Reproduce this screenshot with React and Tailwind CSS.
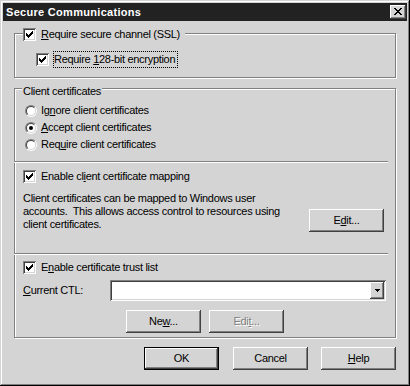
const FACE = 'bg-[#d4d4d4]';
const SUNKEN = 'shadow-[inset_1px_1px_0_#808080,inset_-1px_-1px_0_#fff,inset_2px_2px_0_#404040,inset_-2px_-2px_0_#d4d4d4]';
const RAISED = 'shadow-[inset_-1px_-1px_0_#404040,inset_1px_1px_0_#fff,inset_-2px_-2px_0_#808080,inset_2px_2px_0_#d4d4d4]';
const ETCHED = 'border border-[#808080] shadow-[inset_1px_1px_0_#fff,1px_1px_0_#fff]';

function Check({ checked = true }) {
  return (
    <span className={`inline-flex shrink-0 w-[13px] h-[13px] pl-[3px] pt-[3px] bg-white ${SUNKEN}`}>
      {checked && (
        <svg width="7" height="7" viewBox="0 0 7 7" shapeRendering="crispEdges" className="block">
          <path
            fill="#000"
            d="M6 0h1v1h-1zM5 1h2v1h-2zM0 2h1v1h-1zM4 2h3v1h-3zM0 3h2v1h-2zM3 3h3v1h-3zM0 4h5v1h-5zM1 5h3v1h-3zM2 6h1v1h-1z"
          />
        </svg>
      )}
    </span>
  );
}

function Radio({ checked }) {
  return (
    <span className="inline-flex shrink-0 w-[12px] h-[12px] rounded-full border border-t-[#808080] border-l-[#808080] border-r-white border-b-white">
      <span className="flex items-center justify-center w-[10px] h-[10px] rounded-full border border-t-[#404040] border-l-[#404040] border-r-[#d4d4d4] border-b-[#d4d4d4] bg-white">
        {checked && <span className="block w-[4px] h-[4px] rounded-full bg-black" />}
      </span>
    </span>
  );
}

function Btn({ children, isDefault, disabled, className = '' }) {
  const frame = isDefault
    ? 'border border-black shadow-[inset_-1px_-1px_0_#404040,inset_1px_1px_0_#fff,inset_-2px_-2px_0_#808080]'
    : RAISED;
  return (
    <div className={`flex items-center justify-center w-[75px] h-[23px] shrink-0 ${FACE} ${frame} ${className}`}>
      <span className={disabled ? 'text-[#808080] [text-shadow:1px_1px_0_#fff]' : ''}>{children}</span>
    </div>
  );
}

function Sep() {
  return <div className="-ml-[1px] mr-[7px] h-[2px] border-t border-t-[#808080] border-b border-b-white" />;
}

function CloseBtn() {
  return (
    <div className={`flex w-[16px] h-[14px] pl-[4px] pt-[3px] ${FACE} shadow-[inset_-1px_-1px_0_#404040,inset_1px_1px_0_#fff,inset_-2px_-2px_0_#808080]`}>
      <svg width="8" height="7" viewBox="0 0 8 7" shapeRendering="crispEdges" className="block">
        <path
          fill="#000"
          d="M0 0h2v1h-2zM6 0h2v1h-2zM1 1h2v1h-2zM5 1h2v1h-2zM2 2h4v1h-4zM3 3h2v1h-2zM2 4h4v1h-4zM1 5h2v1h-2zM5 5h2v1h-2zM0 6h2v1h-2zM6 6h2v1h-2z"
        />
      </svg>
    </div>
  );
}

function Combo() {
  return (
    <div className={`flex justify-end w-[276px] h-[21px] p-[2px] bg-white ${SUNKEN}`}>
      <div className={`flex items-center justify-center w-[14px] h-[17px] ${FACE} shadow-[inset_-1px_-1px_0_#404040,inset_1px_1px_0_#fff,inset_-2px_-2px_0_#808080]`}>
        <svg width="5" height="3" viewBox="0 0 5 3" shapeRendering="crispEdges" className="block">
          <path fill="#000" d="M0 0h5v1h-5zM1 1h3v1h-3zM2 2h1v1h-1z" />
        </svg>
      </div>
    </div>
  );
}

const U = ({ children }) => <span className="underline underline-offset-[1px]">{children}</span>;

export default function App() {
  return (
    <div className={`w-[410px] h-[386px] p-[3px] ${FACE} shadow-[inset_-1px_-1px_0_#000,inset_1px_1px_0_#d4d4d4,inset_-2px_-2px_0_#808080,inset_2px_2px_0_#fff] [font-family:'Liberation_Sans',Arial,sans-serif] text-[11px] leading-[13px] tracking-[-0.3px] text-black`}>
      <div className="flex items-center justify-between h-[18px] pl-[3px] pr-[1px] bg-[#222]">
        <span className="font-bold text-white tracking-[0.3px]">Secure Communications</span>
        <CloseBtn />
      </div>

      <div className="px-[11px]">
        {/* SSL */}
        <div className={`mt-[12px] pb-[9px] ${ETCHED}`}>
          <div className="flex -mt-[6px] ml-[8px]">
            <span className={`flex items-center gap-[5px] h-[13px] pr-[5px] ${FACE}`}>
              <Check />
              <span><U>R</U>equire secure channel (SSL)</span>
            </span>
          </div>
          <div className="flex items-center gap-[4px] h-[17px] mt-[10px] pl-[21px]">
            <Check />
            <span className="border border-dotted border-black leading-[15px] pr-[2px]">
              Require <U>1</U>28-bit encryption
            </span>
          </div>
        </div>

        {/* Client certificates */}
        <div className={`mt-[10px] pb-[4px] ${ETCHED}`}>
          <div className="flex -mt-[4px] ml-[7px]">
            <span className={`h-[13px] px-[1px] ${FACE}`}>Client certificates</span>
          </div>
          <div className="flex flex-col mt-[4px] pl-[10px]">
            <div className="flex items-center gap-[4px] h-[17px]">
              <Radio />
              <span>Ig<U>n</U>ore client certificates</span>
            </div>
            <div className="flex items-center gap-[4px] h-[17px]">
              <Radio checked />
              <span><U>A</U>ccept client certificates</span>
            </div>
            <div className="flex items-center gap-[4px] h-[17px]">
              <Radio />
              <span>Req<U>u</U>ire client certificates</span>
            </div>
          </div>

          <div className="mt-[8px]"><Sep /></div>

          <div className="flex items-center gap-[5px] h-[13px] mt-[7px] pl-[8px]">
            <Check />
            <span>Enable cl<U>i</U>ent certificate mapping</span>
          </div>
          <div className="flex items-start mt-[9px] pl-[8px]">
            <p className="whitespace-pre">
              {'Client certificates can be mapped to Windows user\naccounts.  This allows access control to resources using\nclient certificates.'}
            </p>
            <Btn className="ml-auto mr-[11px] mt-[17px]">E<U>d</U>it...</Btn>
          </div>

          <div className="mt-[21px]"><Sep /></div>

          <div className="flex items-center gap-[5px] h-[13px] mt-[6px] pl-[8px]">
            <Check />
            <span>E<U>n</U>able certificate trust list</span>
          </div>
          <div className="flex items-center mt-[6px] pl-[8px]">
            <span className="w-[87px]"><U>C</U>urrent CTL:</span>
            <Combo />
          </div>
          <div className="flex gap-[8px] mt-[9px] pl-[111px]">
            <Btn>Ne<U>w</U>...</Btn>
            <Btn disabled>Edi<U>t</U>...</Btn>
          </div>
        </div>

        <div className="flex justify-end mt-[9px]">
          <Btn isDefault>OK</Btn>
          <Btn className="ml-[14px]">Cancel</Btn>
          <Btn className="ml-[13px]"><U>H</U>elp</Btn>
        </div>
      </div>
    </div>
  );
}
